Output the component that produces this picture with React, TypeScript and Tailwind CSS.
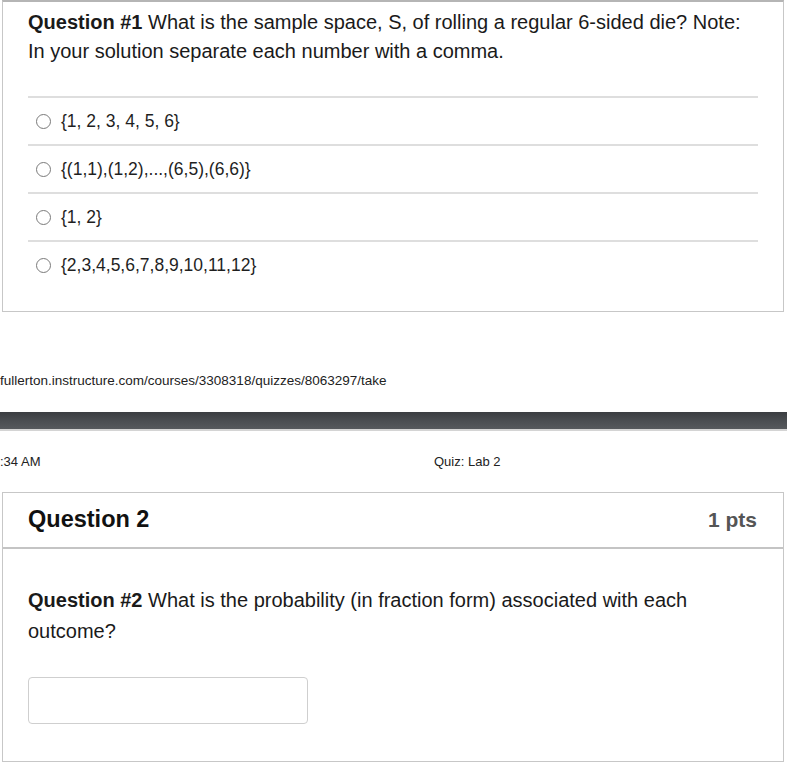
import React from 'react';

const options = [
  '{1, 2, 3, 4, 5, 6}',
  '{(1,1),(1,2),...,(6,5),(6,6)}',
  '{1, 2}',
  '{2,3,4,5,6,7,8,9,10,11,12}',
];

const Radio = () => (
  <span className="inline-block h-[15px] w-[15px] shrink-0 rounded-full border border-[#7a7a7a] bg-white" />
);

export default function App() {
  return (
    <div className="h-[763px] w-[787px] overflow-hidden bg-white text-[#1f1f1f] font-['Liberation_Sans',Arial,sans-serif]">
      {/* Question 1 card (top cut off) */}
      <div className="ml-[2px] w-[782px] border border-t-2 border-[#c7c7c7] border-t-[#b5b5b5] pl-[25px] pr-[25px] pt-[6px] pb-[23px]">
        <p className="text-[20px] leading-[29px] text-[#1a1a1a]">
          <b>Question #1</b> What is the sample space, S, of rolling a regular 6-sided die? Note:
          <br />
          In your solution separate each number with a comma.
        </p>
        <div className="mt-[30px]">
          {options.map((o) => (
            <div
              key={o}
              className="flex h-[48px] items-center gap-[10px] border-t-2 border-[#dedede] pl-[8px] text-[17.5px]"
            >
              <Radio />
              <span>{o}</span>
            </div>
          ))}
        </div>
      </div>

      {/* Print footer / header */}
      <div className="mt-[59px] h-[20px] text-[13.5px] leading-[20px] text-[#222]">
        fullerton.instructure.com/courses/3308318/quizzes/8063297/take
      </div>
      <div className="mt-[21px] h-[19px] border-b-2 border-[#d4d4d4] bg-gradient-to-b from-[#3b3d41] via-[#4a4d51] to-[#56595d]" />
      <div className="mt-[22px] flex h-[18px] text-[13px] leading-[18px] text-[#222]">
        <span className="w-[434px]">:34 AM</span>
        <span>Quiz: Lab 2</span>
      </div>

      {/* Question 2 card */}
      <div className="mt-[21px] ml-[2px] w-[782px] border border-[#c7c7c7]">
        <div className="flex h-[56px] items-center justify-between border-b-2 border-[#c4c4c4] pl-[25px] pr-[26px]">
          <span className="text-[23.5px] font-bold text-[#111]">Question 2</span>
          <span className="text-[21px] font-bold text-[#555]">1 pts</span>
        </div>
        <div className="pl-[25px] pt-[36px] pb-[37px]">
          <p className="w-[680px] text-[20px] leading-[31px] text-[#1a1a1a]">
            <b>Question #2</b> What is the probability (in fraction form) associated with each outcome?
          </p>
          <input
            type="text"
            className="mt-[30px] block h-[47px] w-[280px] rounded-[4px] border border-[#cfcfcf] bg-white outline-none"
          />
        </div>
      </div>
    </div>
  );
}
